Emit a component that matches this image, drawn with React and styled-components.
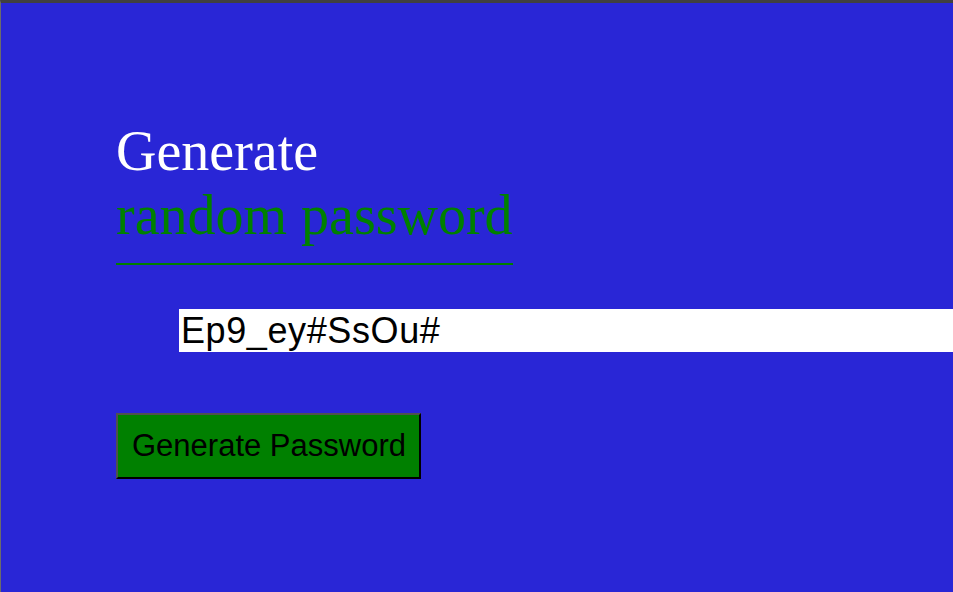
import React, { useState } from "react";
import styled, { createGlobalStyle } from "styled-components";

const Global = createGlobalStyle`
  html, body { margin: 0; padding: 0; background: #2926d6; overflow: hidden; }
  * { box-sizing: border-box; }
`;

const Frame = styled.div`
  width: 953px;
  height: 592px;
  background: #2926d6;
  border-top: 3px solid #404040;
  border-left: 1px solid #6b6b6b;
  padding: 116px 0 0 115px;
  display: flex;
  flex-direction: column;
  align-items: flex-start;
  overflow: hidden;
`;

const Title = styled.h1`
  margin: 0;
  display: inline-block;
  font-family: "Liberation Serif", "Times New Roman", serif;
  font-weight: normal;
  font-size: 56px;
  line-height: 64px;
  color: #ffffff;
  padding-bottom: 16px;
  border-bottom: 2px solid #008000;
`;

const Accent = styled.span`
  display: block;
  color: #008000;
`;

const Field = styled.input`
  margin: 44px 0 0 63px;
  width: 900px;
  height: 43px;
  border: none;
  outline: none;
  padding: 0 2px;
  background: #ffffff;
  color: #000000;
  font-family: "Liberation Sans", Arial, sans-serif;
  font-size: 36px;
  letter-spacing: 0.6px;
`;

const Button = styled.button`
  margin-top: 61px;
  height: 66px;
  padding: 0 13px 0 14px;
  background: #008000;
  color: #000000;
  font-family: "Liberation Sans", Arial, sans-serif;
  font-size: 31px;
  border-style: solid;
  border-width: 2px;
  border-color: #505050 #000000 #000000 #505050;
  cursor: pointer;
`;

const chars = "ABCDEFGHIJKLMNOPQRSTUVWXYZabcdefghijklmnopqrstuvwxyz0123456789!#$%&_";

export default function App() {
  const [pw, setPw] = useState("Ep9_ey#SsOu#");
  const generate = () => {
    let s = "";
    for (let i = 0; i < 12; i++) s += chars[Math.floor(Math.random() * chars.length)];
    setPw(s);
  };
  return (
    <>
      <Global />
      <Frame>
        <Title>
          Generate
          <Accent>random password</Accent>
        </Title>
        <Field type="text" value={pw} readOnly />
        <Button onClick={generate}>Generate Password</Button>
      </Frame>
    </>
  );
}
